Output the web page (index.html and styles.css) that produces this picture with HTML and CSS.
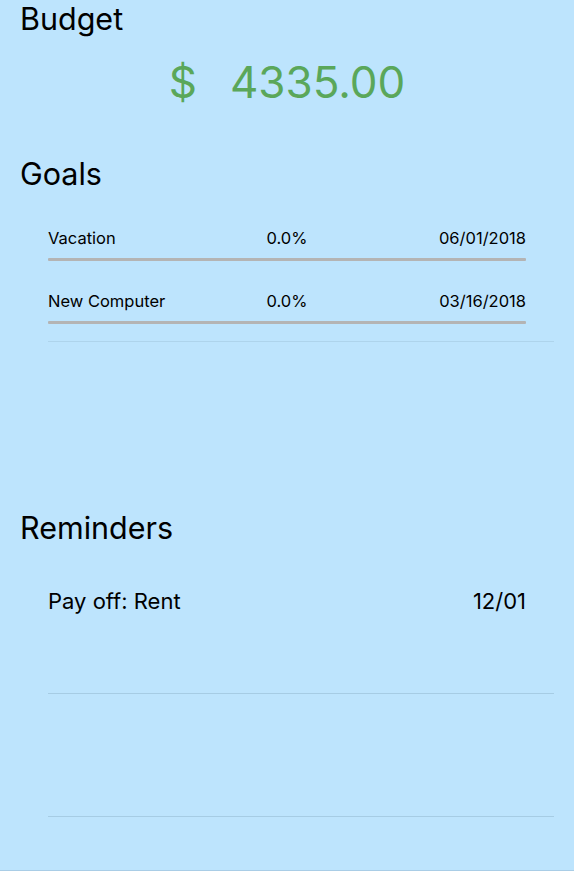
FILE: index.html
```html
<!DOCTYPE html>
<html lang="en">
<head>
<meta charset="utf-8">
<title>Budget</title>
<link rel="stylesheet" href="styles.css">
</head>
<body>
<div class="app">
  <section class="section budget">
    <h1 class="title">Budget</h1>
    <div class="amount"><span class="currency">$</span><span class="value">4335.00</span></div>
  </section>

  <section class="section goals">
    <h1 class="title">Goals</h1>
    <ul class="list">
      <li class="goal">
        <div class="goal-row">
          <span class="goal-name">Vacation</span>
          <span class="goal-pct">0.0%</span>
          <span class="goal-date">06/01/2018</span>
        </div>
        <div class="bar"><div class="bar-fill" style="width:0%"></div></div>
      </li>
      <li class="goal">
        <div class="goal-row">
          <span class="goal-name">New Computer</span>
          <span class="goal-pct">0.0%</span>
          <span class="goal-date">03/16/2018</span>
        </div>
        <div class="bar"><div class="bar-fill" style="width:0%"></div></div>
      </li>
    </ul>
  </section>

  <section class="section reminders">
    <h1 class="title">Reminders</h1>
    <ul class="list">
      <li class="reminder">
        <span class="reminder-name">Pay off: Rent</span>
        <span class="reminder-date">12/01</span>
      </li>
      <li class="reminder"></li>
    </ul>
  </section>
</div>
</body>
</html>
```

FILE: styles.css
```css
* { box-sizing: border-box; }
html, body {
  margin: 0;
  padding: 0;
  height: 100%;
  background: #ffffff;
}
body {
  font-family: Inter, "Liberation Sans", Arial, sans-serif;
  color: #000;
}
.app {
  height: 871px;
  background: #bde4fd;
  border-bottom: 1px solid #a9cde6;
  display: flex;
  flex-direction: column;
}
.section { display: flex; flex-direction: column; }
.title {
  margin: 0;
  padding-left: 20px;
  font-size: 30.5px;
  font-weight: 400;
  line-height: 36px;
  letter-spacing: 0;
}
.budget .title { margin-top: 1px; }
.amount {
  display: flex;
  justify-content: center;
  gap: 33px;
  color: #5aa75a;
  font-size: 44px;
  line-height: 54px;
  margin-top: 18px;
}
.goals { margin-top: 47px; }
.list {
  list-style: none;
  margin: 0;
  padding: 0 20px 0 48px;
}
.goals .list { margin-top: 36px; }
.goal {
  padding: 0 28px 0 0;
  height: 63px;
  display: flex;
  flex-direction: column;
}
.goal-row {
  display: grid;
  grid-template-columns: 1fr 1fr 1fr;
  align-items: center;
  font-size: 16.5px;
  line-height: 20px;
  height: 20px;
}
.goal-pct { text-align: center; }
.goal-date { text-align: right; }
.bar {
  margin-top: 10px;
  height: 3px;
  background: #b4b4b4;
  border-radius: 1px;
}
.bar-fill { height: 100%; background: #5aa75a; }
.goal:last-child { border-bottom: 1px solid #aed4ec; height: 51px; }

.reminders { margin-top: 168px; }
.reminders .list { margin-top: 0; }
.reminder {
  height: 123px;
  border-bottom: 1px solid #a6cce4;
  display: flex;
  justify-content: space-between;
  align-items: flex-start;
  padding: 41px 28px 0 0;
  font-size: 22px;
  line-height: 28px;
}
.reminder:first-child { height: 148px; }
```
